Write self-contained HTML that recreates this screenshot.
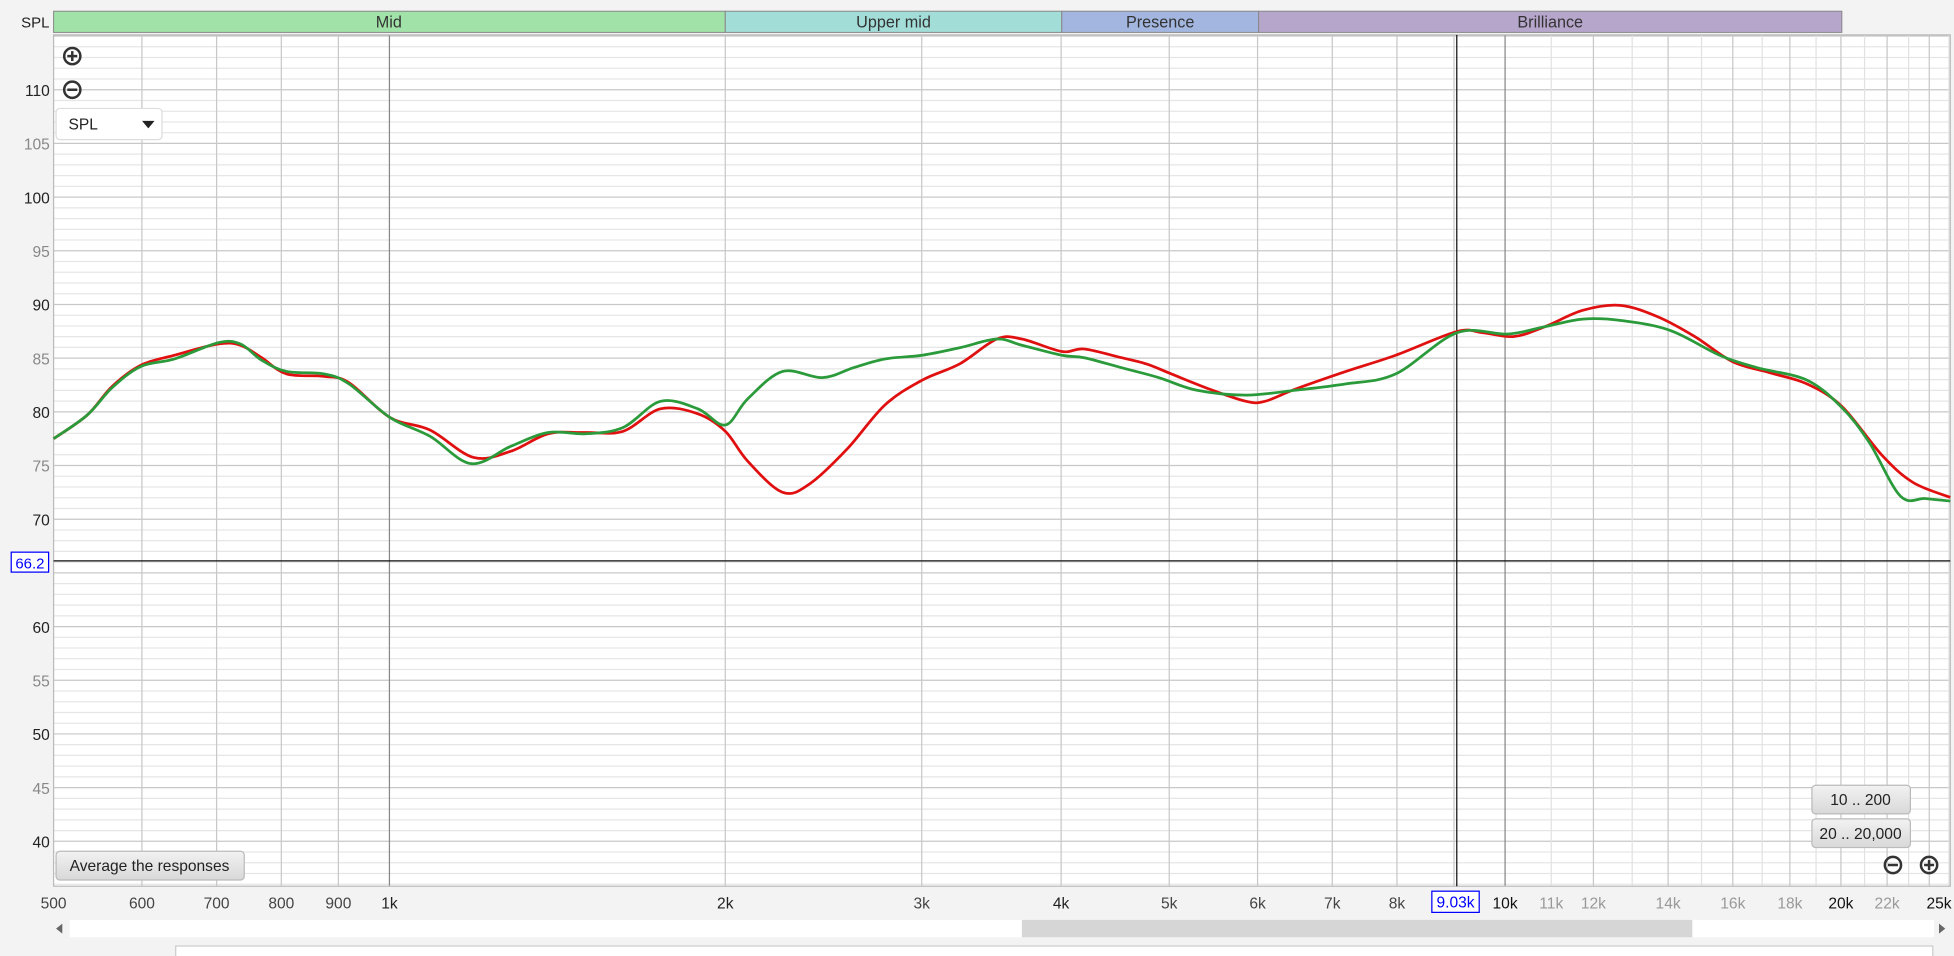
<!DOCTYPE html>
<html><head><meta charset="utf-8"><style>
html,body{margin:0;padding:0;background:#f3f3f3;overflow:hidden}
svg{display:block}
text{font-family:"Liberation Sans",sans-serif}
</style></head><body>
<svg id="s" width="1954" height="956" viewBox="0 0 1568 767" preserveAspectRatio="none" xmlns="http://www.w3.org/2000/svg">
<rect x="0" y="0" width="1568" height="767" fill="#f3f3f3"/>
<rect x="43" y="28" width="1522" height="683" fill="#fff"/>
<g id="grid"></g>
<rect x="43" y="28" width="1522" height="683" fill="none" stroke="#bbb"/>
<!-- bands -->
<rect x="43" y="9" width="539" height="17" fill="#a0e2a8" stroke="#888" stroke-width="0.8"/>
<rect x="582" y="9" width="270" height="17" fill="#a2ddd8" stroke="#888" stroke-width="0.8"/>
<rect x="852" y="9" width="158" height="17" fill="#a2b6e0" stroke="#888" stroke-width="0.8"/>
<rect x="1010" y="9" width="468" height="17" fill="#b6a6cc" stroke="#888" stroke-width="0.8"/>
<g font-size="13" fill="#333" text-anchor="middle">
<text x="312" y="22">Mid</text><text x="717" y="22">Upper mid</text><text x="931" y="22">Presence</text><text x="1244" y="22">Brilliance</text>
</g>
<text x="17" y="22" font-size="12" fill="#222">SPL</text>
<g id="ylab" font-size="12.5" text-anchor="end"></g>
<g id="xlab" font-size="12.5" text-anchor="middle"></g>
<!-- cursor lines -->
<line x1="43" y1="450" x2="1565" y2="450" stroke="#111" stroke-width="1"/>
<line x1="1169" y1="28" x2="1169" y2="711" stroke="#111" stroke-width="1"/>
<rect x="9" y="443" width="30" height="16" fill="#fff" stroke="#00f"/>
<text x="24" y="456" font-size="12" fill="#00f" text-anchor="middle">66.2</text>
<rect x="1149" y="715" width="38" height="17" fill="#fff" stroke="#00f"/>
<text x="1168" y="728" font-size="12.5" fill="#00f" text-anchor="middle">9.03k</text>
<path id="red" fill="none" stroke="#e01010" stroke-width="2.2"/>
<path id="green" fill="none" stroke="#2a9a3a" stroke-width="2.2"/>
<!-- zoom icons -->
<g stroke="#333" stroke-width="2" fill="none">
<circle cx="58" cy="45" r="6.5"/><line x1="54" y1="45" x2="62" y2="45"/><line x1="58" y1="41" x2="58" y2="49"/>
<circle cx="58" cy="72" r="6.5"/><line x1="54" y1="72" x2="62" y2="72"/>
<circle cx="1519" cy="694" r="6.5"/><line x1="1515" y1="694" x2="1523" y2="694"/>
<circle cx="1548" cy="694" r="6.5"/><line x1="1544" y1="694" x2="1552" y2="694"/><line x1="1548" y1="690" x2="1548" y2="698"/>
</g>
<rect x="45" y="87" width="85" height="25" rx="3" fill="#fff" stroke="#ddd"/>
<text x="55" y="104" font-size="12.5" fill="#222">SPL</text>
<path d="M114 97 L124 97 L119 103 Z" fill="#222"/>
<defs><linearGradient id="bg" x1="0" y1="0" x2="0" y2="1"><stop offset="0" stop-color="#f2f2f2"/><stop offset="1" stop-color="#d8d8d8"/></linearGradient></defs>
<rect x="45" y="683" width="151" height="23" rx="3" fill="url(#bg)" stroke="#bbb"/>
<text x="120" y="699" font-size="12.5" fill="#222" text-anchor="middle">Average the responses</text>
<rect x="1454" y="630" width="79" height="23" rx="3" fill="url(#bg)" stroke="#bbb"/>
<text x="1493" y="646" font-size="12.5" fill="#222" text-anchor="middle">10 .. 200</text>
<rect x="1454" y="657" width="79" height="23" rx="3" fill="url(#bg)" stroke="#bbb"/>
<text x="1493" y="673" font-size="12.5" fill="#222" text-anchor="middle">20 .. 20,000</text>
<!-- scrollbar -->
<rect x="56" y="738" width="1496" height="14" fill="#fff"/>
<rect x="820" y="738" width="538" height="14" fill="#d6d6d6"/>
<path d="M50 741 L45 745 L50 749 Z" fill="#666"/>
<path d="M1556 741 L1561 745 L1556 749 Z" fill="#666"/>
<rect x="141" y="759" width="1410" height="10" fill="#fff" stroke="#ccc"/>
</svg>
<script>
var NS="http://www.w3.org/2000/svg";
function el(p,t,a,txt){var e=document.createElementNS(NS,t);for(var k in a)e.setAttribute(k,a[k]);if(txt!=null)e.textContent=txt;p.appendChild(e);return e;}
var g=document.getElementById('grid');
function yv(db){return 72+(110-db)*43.07/5;}
function xf(f){return 43+269.5*Math.log2(f/500);}
for(var d=36;d<=115;d++){var y=yv(d);if(y<28||y>711)continue;el(g,'line',{x1:43,x2:1565,y1:y,y2:y,stroke:d%5==0?'#c8c8c8':'#e6e6e6','stroke-width':1});}
var fs=[];for(var f=600;f<1000;f+=100)fs.push(f);for(f=1000;f<=25000;f+=1000)fs.push(f);
fs.forEach(function(f){var x=xf(f);if(x>1565)return;var dk=(f==1000||f==10000);el(g,'line',{x1:x,x2:x,y1:28,y2:711,stroke:dk?'#888':(f<=10000||f%2000==0?'#c8c8c8':'#e2e2e2'),'stroke-width':1});});
var yl=document.getElementById('ylab');
for(d=40;d<=110;d+=5){if(d==65)continue;el(yl,'text',{x:40,y:yv(d)+5,fill:d%10==0?'#222':'#888'},String(d));}
var xl=document.getElementById('xlab');
var labs=[[500,'500','#444'],[600,'600','#444'],[700,'700','#444'],[800,'800','#444'],[900,'900','#444'],[1000,'1k','#222'],[2000,'2k','#222'],[3000,'3k','#444'],[4000,'4k','#222'],[5000,'5k','#444'],[6000,'6k','#444'],[7000,'7k','#444'],[8000,'8k','#444'],[10000,'10k','#111'],[11000,'11k','#999'],[12000,'12k','#999'],[14000,'14k','#999'],[16000,'16k','#999'],[18000,'18k','#999'],[20000,'20k','#111'],[22000,'22k','#999'],[25000,'25k','#111']];
labs.forEach(function(l){var x=xf(l[0]);if(x>1560)x=1556;el(xl,'text',{x:x,y:729,fill:l[2]},l[1]);});
function cr(p){var s='M'+p[0][0]+' '+p[0][1];for(var i=0;i<p.length-1;i++){var p0=p[i-1]||p[i],p1=p[i],p2=p[i+1],p3=p[i+2]||p2;s+=' C'+(p1[0]+(p2[0]-p0[0])/6)+' '+(p1[1]+(p2[1]-p0[1])/6)+' '+(p2[0]-(p3[0]-p1[0])/6)+' '+(p2[1]-(p3[1]-p1[1])/6)+' '+p2[0]+' '+p2[1];}return s;}
var red=[[43,352],[70,333],[90,310],[113,293],[140,285],[175,276],[193,277],[210,287],[230,300],[260,302],[280,307],[313,335],[345,345],[380,367],[410,362],[440,348],[470,347],[500,346],[530,328],[560,332],[582,346],[600,370],[628,395],[650,388],[680,360],[710,325],[740,305],[770,292],[800,272],[820,272],[852,282],[870,280],[900,287],[920,292],[940,300],[970,312],[1000,322],[1015,322],[1040,312],[1080,298],[1120,285],[1169,266],[1190,267],[1215,270],[1240,262],[1270,249],[1300,245],[1330,254],[1360,270],[1390,290],[1420,299],[1450,308],[1478,326],[1510,365],[1535,387],[1565,399]];
var green=[[43,352],[70,333],[90,311],[113,294],[140,288],[175,275],[193,276],[210,289],[230,298],[260,300],[280,308],[313,335],[345,350],[378,372],[410,358],[440,347],[470,348],[500,343],[530,322],[560,328],[582,341],[600,320],[628,298],[660,303],[685,295],[710,288],[740,285],[770,279],[800,272],[820,277],[852,285],[870,287],[900,295],[930,303],[960,313],[1000,317],[1040,313],[1080,308],[1120,300],[1169,267],[1210,268],[1240,262],[1270,256],[1300,257],[1340,265],[1380,285],[1410,295],[1450,305],[1478,327],[1500,355],[1525,398],[1545,400],[1565,402]];
document.getElementById('red').setAttribute('d',cr(red));
document.getElementById('green').setAttribute('d',cr(green));
</script>
</body></html>
